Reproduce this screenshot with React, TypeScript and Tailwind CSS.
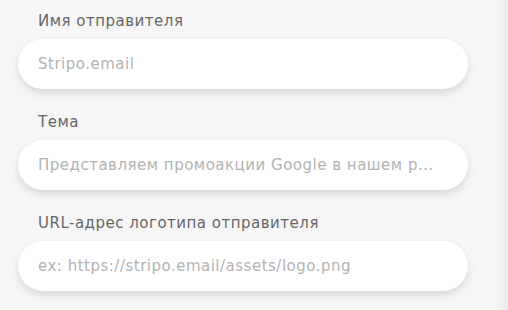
import React from "react";

const fields = [
  { label: "Имя отправителя", placeholder: "Stripo.email" },
  { label: "Тема", placeholder: "Представляем промоакции Google в нашем р..." },
  { label: "URL-адрес логотипа отправителя", placeholder: "ex: https://stripo.email/assets/logo.png" },
];

export default function App() {
  return (
    <div className="flex h-[310px] w-[508px] overflow-hidden bg-[#f6f6f6] font-['DejaVu_Sans',sans-serif]">
      <div className="flex w-[494px] flex-col pl-[18px] pt-[11px]">
        {fields.map((f) => (
          <div key={f.label} className="mb-[23px] flex flex-col">
            <div className="h-5 pl-5 text-[15px] leading-5 tracking-[0.5px] text-[#666666]">{f.label}</div>
            <div className="mt-2 flex h-[50px] w-[450px] items-center rounded-full bg-white px-5 shadow-[0_4px_8px_rgba(0,0,0,0.12)]">
              <span className="truncate text-[15px] tracking-[0.5px] text-[#b3b3b3]">{f.placeholder}</span>
            </div>
          </div>
        ))}
      </div>
      <div className="h-full flex-1 bg-gradient-to-r from-[#f6f6f6] to-[#ebebeb]" />
    </div>
  );
}
